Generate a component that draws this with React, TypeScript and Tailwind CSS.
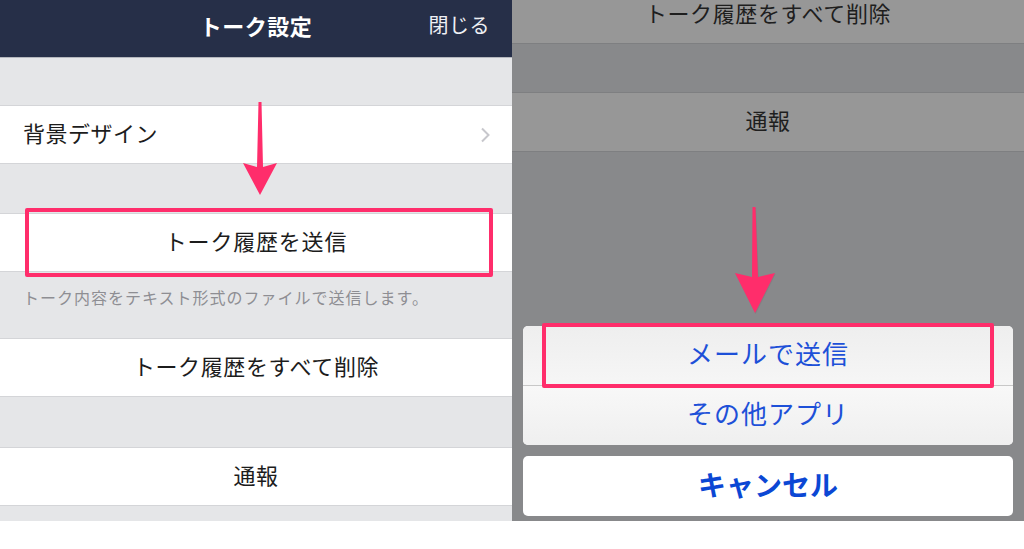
import React from "react";

const jp = { fontFamily: '"Noto Sans CJK JP", "Noto Sans", sans-serif' };

const Row: React.FC<{ children: React.ReactNode; className?: string }> = ({ children, className = "" }) => (
  <div className={`h-[59px] bg-white border-y border-[#d4d5d8] flex items-center pb-[6px] ${className}`}>{children}</div>
);

const LeftPanel: React.FC = () => (
  <div className="relative w-[512px] h-[521px] bg-[#e5e6e8] flex flex-col">
    <div className="h-[58px] bg-[#262f48] border-b border-[#b4b7be] flex items-center justify-center pb-[7px] relative">
      <span className="text-white text-[22px] font-bold leading-none tracking-[0.5px]">トーク設定</span>
      <span className="absolute right-[22px] text-[#eef0f4] text-[20px] leading-none tracking-[0.5px]">閉じる</span>
    </div>
    <div className="h-[47px]" />
    <Row className="justify-between pl-[23px] pr-[22px]">
      <span className="text-[22px] leading-none text-[#1c1c1c] tracking-[0.5px]">背景デザイン</span>
      <svg className="mt-[6px]" width="10" height="16" viewBox="0 0 10 16" fill="none">
        <path d="M2 1.5 L8.5 8 L2 14.5" stroke="#c7c7cc" strokeWidth="2" />
      </svg>
    </Row>
    <div className="h-[49px]" />
    <Row className="justify-center">
      <span className="text-[22px] leading-none text-[#1c1c1c] tracking-[0.8px]">トーク履歴を送信</span>
    </Row>
    <div className="h-[66px] pt-[13px] pl-[23px]">
      <span className="text-[16px] leading-[16px] text-[#8e8e93] tracking-[1px]">トーク内容をテキスト形式のファイルで送信します。</span>
    </div>
    <Row className="justify-center">
      <span className="text-[22px] leading-none text-[#1c1c1c] tracking-[0.6px]">トーク履歴をすべて削除</span>
    </Row>
    <div className="h-[50px]" />
    <Row className="justify-center">
      <span className="text-[22px] leading-none text-[#1c1c1c] tracking-[0.5px]">通報</span>
    </Row>

    <div className="absolute left-[25px] top-[208px] w-[468px] h-[69px] border-[4px] border-[#ff2d6b] rounded-[2px]" />
    <svg className="absolute left-[240px] top-[100px]" width="40" height="98" viewBox="0 0 40 98">
      <path d="M18.5 2 L21.5 2 L23 67 L37 63 L20 95 L3 63 L17 67 Z" fill="#ff2d6b" />
    </svg>
  </div>
);

const RightPanel: React.FC = () => (
  <div className="relative w-[512px] h-[521px] bg-[#88898b] flex flex-col">
    <div className="h-[44px] bg-[#979797] border-b border-[#7e7f81] flex justify-center pt-[1px]">
      <span className="text-[22px] leading-[22px] text-[#1e1e1e] tracking-[0.6px]">トーク履歴をすべて削除</span>
    </div>
    <div className="h-[48px]" />
    <div className="h-[60px] bg-[#979797] border-y border-[#7e7f81] flex items-center justify-center pb-[6px]">
      <span className="text-[22px] leading-none text-[#1e1e1e] tracking-[0.5px]">通報</span>
    </div>
    <div className="flex-1" />
    <div className="px-[11px] pb-[5px]">
      <div className="rounded-[5px] overflow-hidden bg-[#f3f3f3]">
        <div className="h-[60px] border-b border-[#c8c8c8] bg-gradient-to-b from-[#eeeeee] to-[#f6f6f6] flex items-center justify-center pb-[5px]">
          <span className="text-[26px] leading-none text-[#1d50d8] tracking-[1px]">メールで送信</span>
        </div>
        <div className="h-[59px] bg-gradient-to-b from-[#f8f8f8] to-[#efefef] flex items-center justify-center pb-[5px]">
          <span className="text-[26px] leading-none text-[#1d50d8] tracking-[1px]">その他アプリ</span>
        </div>
      </div>
      <div className="mt-[11px] h-[60px] rounded-[5px] bg-white flex items-center justify-center pb-[5px]">
        <span className="text-[28px] leading-none font-bold text-[#0b47d4]">キャンセル</span>
      </div>
    </div>

    <div className="absolute left-[30px] top-[323px] w-[452px] h-[65px] border-[4px] border-[#ff2d6b] rounded-[2px]" />
    <svg className="absolute left-[220px] top-[205px]" width="44" height="112" viewBox="0 0 44 112">
      <path d="M20.5 2 L23.5 2 L26 72 L43 68 L23 108 L3 68 L20 72 Z" fill="#7a6a70" opacity="0.35" transform="translate(0.6 1)" />
      <path d="M20.5 2 L23.5 2 L26 72 L43 68 L23 108 L3 68 L20 72 Z" fill="#ff2d6b" />
    </svg>
  </div>
);

export default function App() {
  return (
    <div className="w-[1024px] h-[549px] bg-white overflow-hidden" style={jp}>
      <div className="flex">
        <LeftPanel />
        <RightPanel />
      </div>
    </div>
  );
}
